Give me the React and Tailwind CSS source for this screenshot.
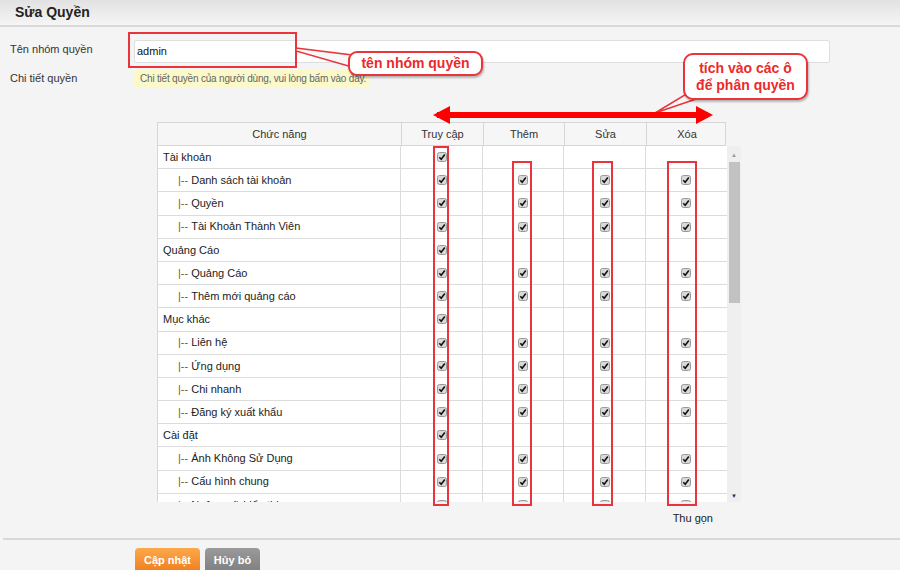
const rows = [
  { label: 'Tài khoản', parent: true },
  { label: 'Danh sách tài khoản' },
  { label: 'Quyền' },
  { label: 'Tài Khoản Thành Viên' },
  { label: 'Quảng Cáo', parent: true },
  { label: 'Quảng Cáo' },
  { label: 'Thêm mới quảng cáo' },
  { label: 'Mục khác', parent: true },
  { label: 'Liên hệ' },
  { label: 'Ứng dụng' },
  { label: 'Chi nhanh' },
  { label: 'Đăng ký xuất khẩu' },
  { label: 'Cài đặt', parent: true },
  { label: 'Ảnh Không Sử Dụng' },
  { label: 'Cấu hình chung' },
  { label: 'Ngôn ngữ hiển thị' },
];

function Check() {
  return (
    <svg width="10" height="10" viewBox="0 0 10 10">
      <rect x="0.5" y="0.5" width="9" height="9" rx="2" fill="#d9d9d9" stroke="#9a9a9a" />
      <path d="M2.3 5.2 L4.2 7.2 L7.8 2.6" fill="none" stroke="#111" strokeWidth="1.6" />
    </svg>
  );
}

function Cell({ on }) {
  return (
    <div className="flex items-center justify-center border-l border-[#dcdcdc]">
      {on && <Check />}
    </div>
  );
}

export default function App() {
  return (
    <div className="relative w-[900px] h-[570px] overflow-hidden bg-[#f4f4f4] text-[11px] text-[#333] font-['Liberation_Sans',Arial,sans-serif]">
      {/* tiêu đề */}
      <div className="h-[27px] flex items-center pl-[15px] bg-gradient-to-b from-[#e2e2e2] to-[#f5f5f5] border-b-2 border-[#d9d9d9]">
        <h1 className="text-[14px] font-bold text-[#222]">Sửa Quyền</h1>
      </div>

      {/* form */}
      <div className="flex items-center mt-[13px] h-[23px]">
        <label className="w-[134px] pl-[10px] -mt-[4px]">Tên nhóm quyền</label>
        <div className="w-[696px] h-[23px] bg-white border border-[#dedede] rounded-[2px] flex items-center pl-[2px] text-[#111]">admin</div>
      </div>
      <div className="flex items-center mt-[7px] h-[17px]">
        <label className="w-[134px] pl-[10px]">Chi tiết quyền</label>
        <div className="h-[17px] bg-[#fbf8c9] flex items-center pl-[6px] pr-[3px] whitespace-nowrap text-[10px] tracking-[-0.2px] text-[#666]">
          Chi tiết quyền của người dùng, vui lòng bấm vào đây.
        </div>
      </div>

      {/* bảng quyền */}
      <div className="ml-[157px] mt-[35px] w-[584px]">
        <div className="grid grid-cols-[243px_82px_81px_82px_81px] w-[569px] h-[24px] bg-[#f6f6f6] border border-[#d6d6d6] text-center">
          <div className="flex items-center justify-center">Chức năng</div>
          <div className="flex items-center justify-center border-l border-[#d6d6d6]">Truy cập</div>
          <div className="flex items-center justify-center border-l border-[#d6d6d6]">Thêm</div>
          <div className="flex items-center justify-center border-l border-[#d6d6d6]">Sửa</div>
          <div className="flex items-center justify-center border-l border-[#d6d6d6]">Xóa</div>
        </div>
        <div className="flex h-[356px]">
          <div className="w-[570px] h-full overflow-hidden bg-white border-l border-[#d6d6d6]">
            {rows.map((r, i) => (
              <div key={i} className="grid grid-cols-[242px_82px_81px_82px_81px] h-[23.2px] border-b border-[#dcdcdc]">
                <div className={r.parent ? 'flex items-center pl-[5px] text-[#222]' : 'flex items-center pl-[20px] text-[#222]'}>
                  {!r.parent && <span className="text-[#7a5a1a] mr-[3px]">|--</span>}
                  {r.label}
                </div>
                <Cell on />
                <Cell on={!r.parent} />
                <Cell on={!r.parent} />
                <Cell on={!r.parent} />
              </div>
            ))}
          </div>
          <div className="w-[14px] h-full bg-[#efefef] flex flex-col items-center">
            <span className="mt-[6px] text-[6px] leading-[6px] text-[#9a9a9a]">▲</span>
            <div className="mt-[4px] w-[11px] h-[141px] bg-[#c2c2c2]" />
            <div className="flex-1" />
            <span className="mb-[3px] text-[6px] leading-[6px] text-[#333]">▼</span>
          </div>
        </div>
        <div className="flex justify-end pr-[28px] mt-[8px] text-[#222]">Thu gọn</div>
      </div>

      <div className="mt-[11px] ml-[3px] border-t-2 border-[#d8d8d8]" />

      <div className="flex gap-[5px] ml-[135px] mt-[8px]">
        <button className="w-[65px] h-[26px] rounded-[4px] bg-gradient-to-b from-[#fba94a] to-[#ee7a16] text-white font-bold text-[11px]">Cập nhật</button>
        <button className="w-[55px] h-[26px] rounded-[4px] bg-gradient-to-b from-[#9a9a9a] to-[#7d7d7d] text-white font-bold text-[11px]">Hủy bỏ</button>
      </div>

      {/* chú thích */}
      <div className="absolute left-[128px] top-[32px] w-[169px] h-[36px] border-2 border-[#e8343a]" />
      <svg className="absolute left-0 top-0" width="900" height="570">
        <polygon points="296,48 352,55 352,67 296,51" fill="#f7f7f7" stroke="#e8343a" strokeWidth="1.5" />
        <polygon points="655,113 688,93 702,97" fill="#f7f7f7" stroke="#e8343a" strokeWidth="1.5" />
        <rect x="437" y="112" width="271" height="6" fill="#ff0000" />
        <polygon points="433,115 450,106 450,124" fill="#ff0000" />
        <polygon points="713,115 696,106 696,124" fill="#ff0000" />
      </svg>
      <div className="absolute left-[348px] top-[51px] w-[135px] h-[25px] rounded-[9px] border-2 border-[#e8343a] bg-white shadow-[1px_2px_2px_rgba(0,0,0,0.25)] flex items-center justify-center text-[#ec2a2a] font-bold text-[14px]">
        tên nhóm quyền
      </div>
      <div className="absolute left-[683px] top-[53px] w-[125px] h-[47px] rounded-[10px] border-2 border-[#e8343a] bg-white shadow-[1px_2px_2px_rgba(0,0,0,0.25)] flex flex-col items-center justify-center text-[#ec2a2a] font-bold text-[14px] leading-[17px]">
        <span>tích vào các ô</span>
        <span>để phân quyền</span>
      </div>
      <div className="absolute left-[433px] top-[146px] w-[16px] h-[360px] border-2 border-[#e8343a]" />
      <div className="absolute left-[512px] top-[161px] w-[20px] h-[345px] border-2 border-[#e8343a]" />
      <div className="absolute left-[592px] top-[161px] w-[21px] h-[345px] border-2 border-[#e8343a]" />
      <div className="absolute left-[667px] top-[161px] w-[30px] h-[345px] border-2 border-[#e8343a]" />
    </div>
  );
}
